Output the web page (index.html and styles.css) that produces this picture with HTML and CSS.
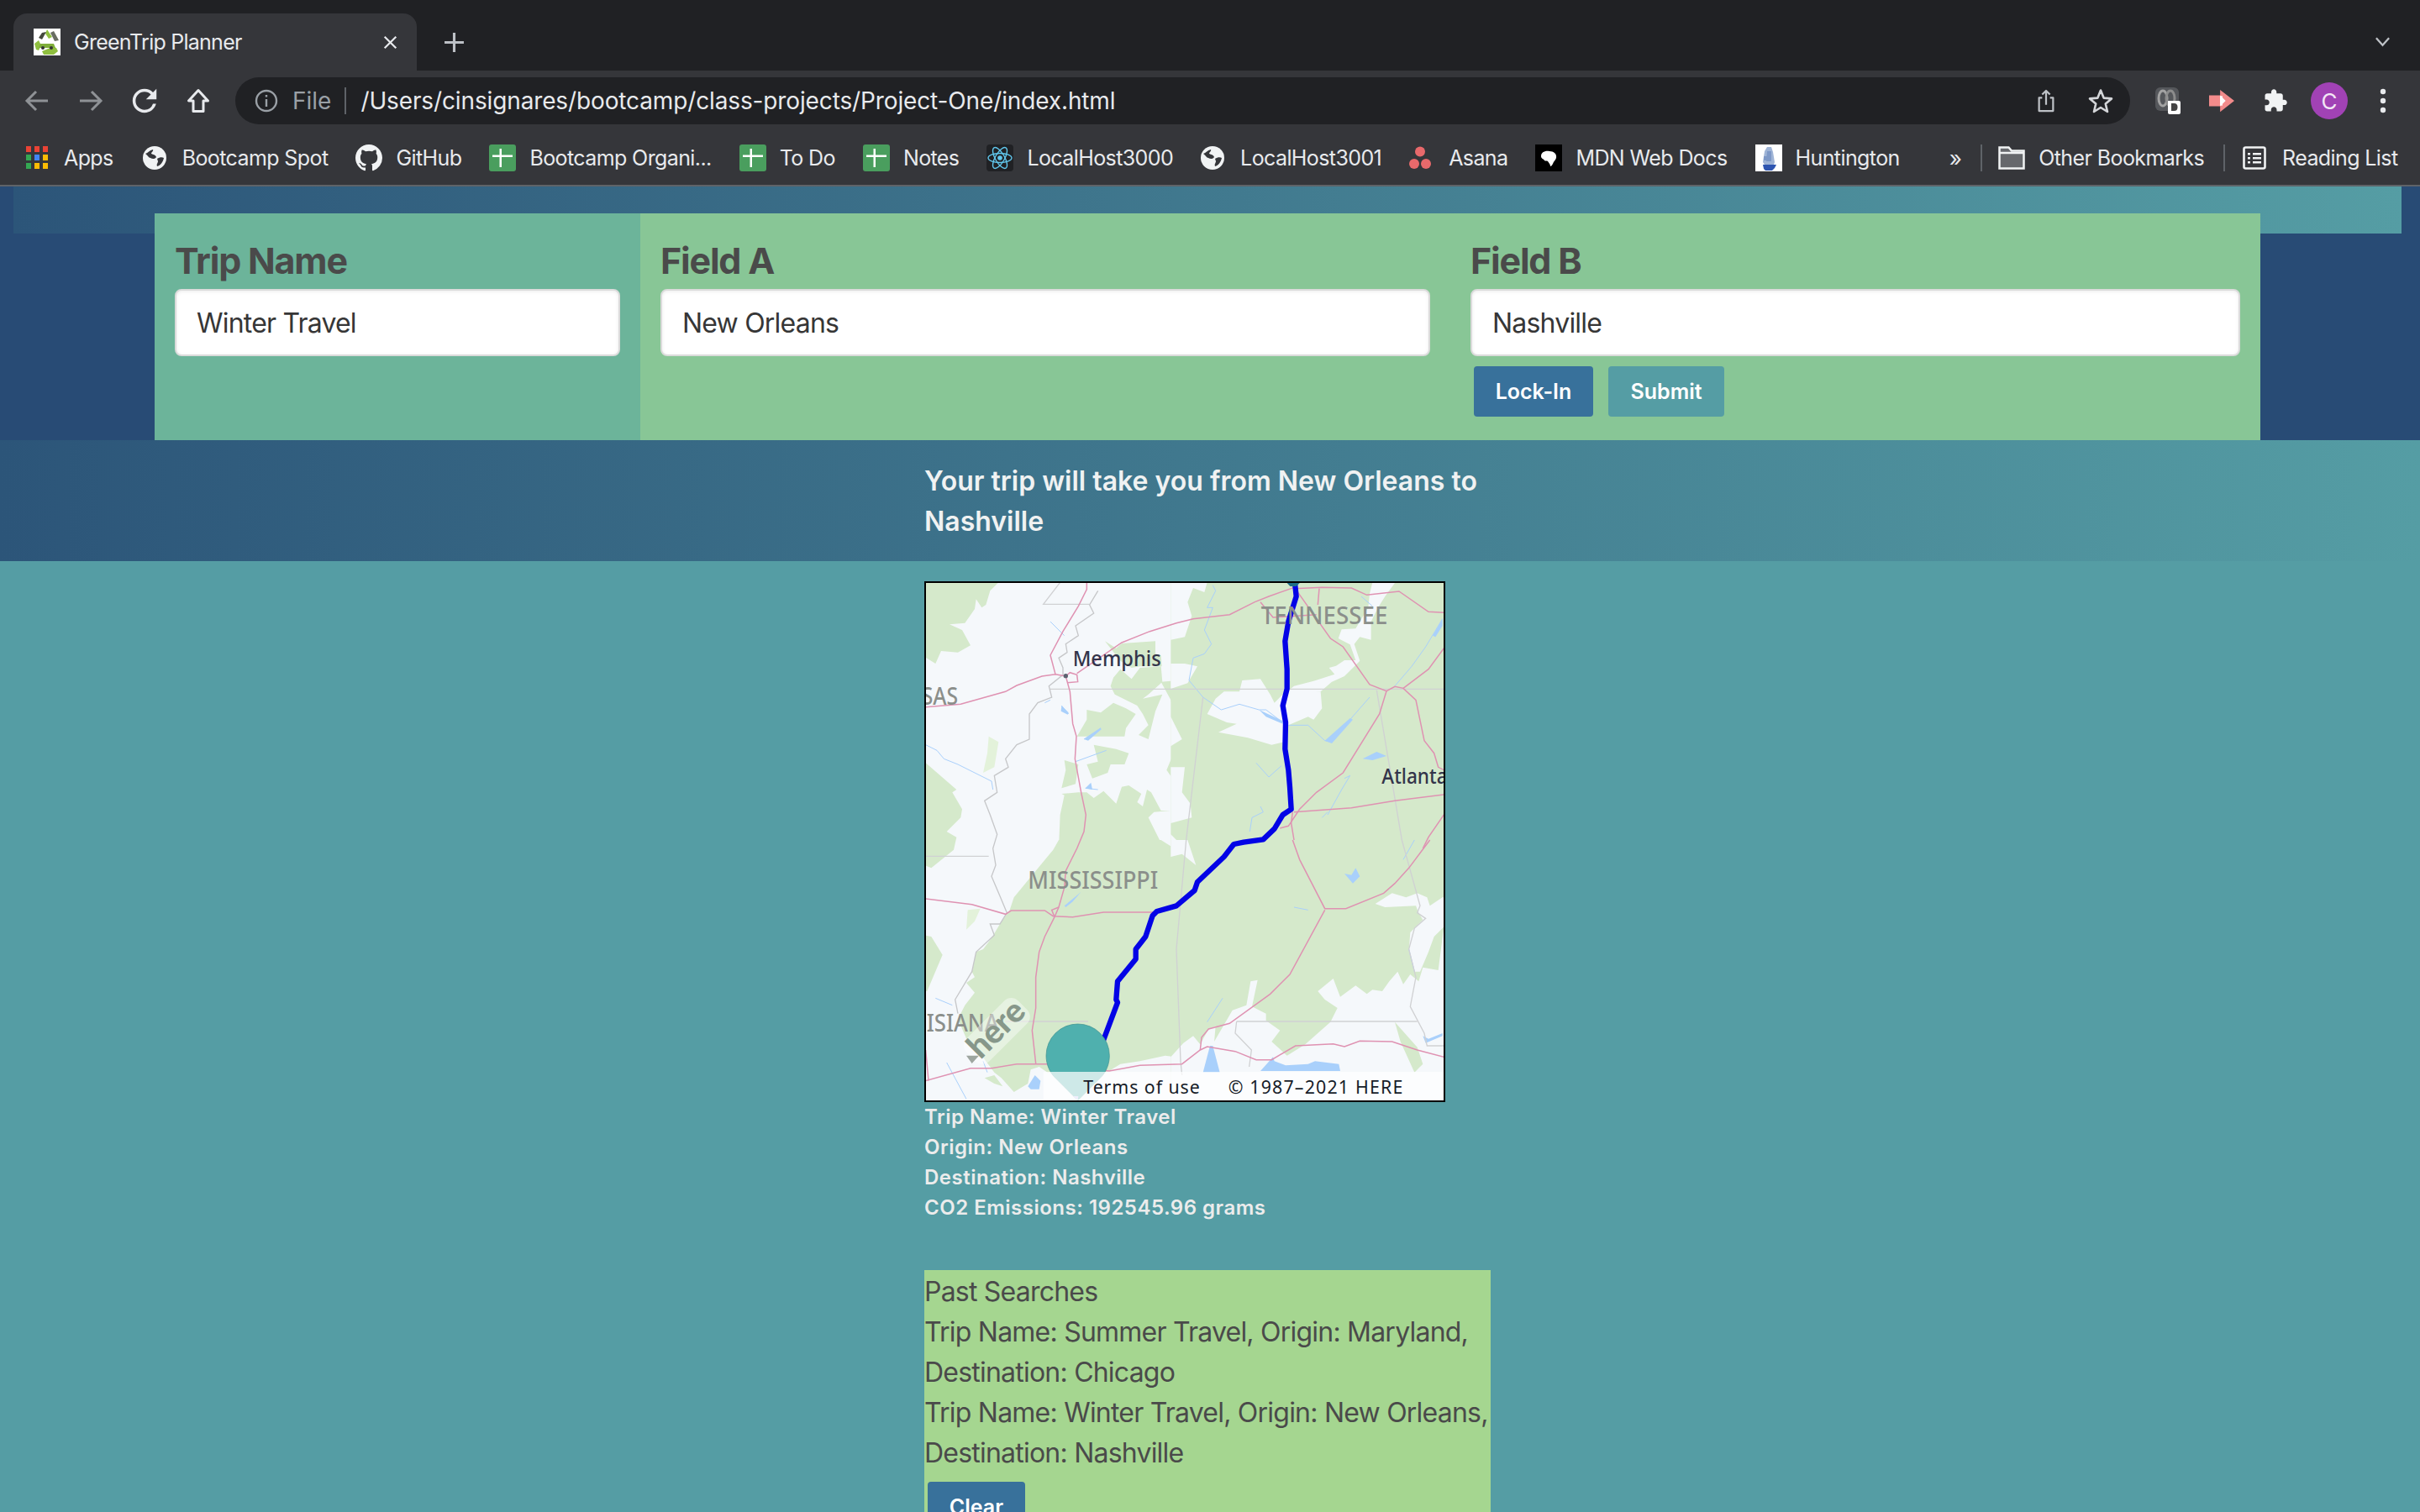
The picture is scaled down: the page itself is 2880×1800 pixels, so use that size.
FILE: index.html
```html
<!DOCTYPE html>
<html lang="en">
<head>
<meta charset="utf-8">
<title>GreenTrip Planner</title>
<link rel="stylesheet" href="styles.css">
</head>
<body>
<svg class="defs" width="0" height="0" aria-hidden="true">
  <defs>
    <symbol id="i-green" viewBox="0 0 32 32"><rect width="32" height="32" rx="3" fill="#4a9e5e"/><path d="M4 12.500h24v2.500H4zM12.500 5h2.500v22h-2.500z" fill="#fff"/></symbol>
    <symbol id="i-globe" viewBox="0 0 28 28"><circle cx="14" cy="14" r="14" fill="#f1f3f4"/><path d="M3 9c3-1 5-4 9-5 1 2-2 3-2 5 2 1 5 1 6 4-2 3-5 2-7 1-2 0-3-3-6-5zM17 15c3-2 6-2 8-1-1 5-4 9-8 10-1-3 1-4 1-6z" fill="#35363a"/></symbol>
  </defs>
</svg>

<header class="chrome">
  <div class="tabstrip">
    <div class="tab">
      <svg class="favicon" viewBox="0 0 32 32"><rect width="32" height="32" fill="#fff"/><path d="M16 1 22 10 18 12 14 6z" fill="#8fbf3f"/><path d="M10 5 15 4 10 13 6 11z" fill="#44483c"/><path d="M1 18 6 14 9 20 6 26 3 25z" fill="#8fbf3f"/><path d="M24 3 30 14 25 15 20 5z" fill="#44483c" opacity=".8"/><path d="M10 27 22 22 27 23 29 27 24 31 12 31z" fill="#8fbf3f"/><path d="M8 18h16l2 5H6z" fill="#7fae3a"/><circle cx="11" cy="23" r="2" fill="#333"/><circle cx="21" cy="23" r="2" fill="#333"/></svg>
      <span class="tab-title">GreenTrip Planner</span>
      <svg class="tab-x" viewBox="0 0 20 20"><path d="M2 2l16 16M18 2 2 18" stroke="#e8eaed" stroke-width="2.600" fill="none"/></svg>
    </div>
    <svg class="tab-plus" viewBox="0 0 24 24"><path d="M12 1v22M1 12h22" stroke="#bdc1c6" stroke-width="3" fill="none"/></svg>
    <svg class="tab-chev" viewBox="0 0 20 12"><path d="M2 1l8 9 8-9" stroke="#bdc1c6" stroke-width="2.400" fill="none"/></svg>
  </div>

  <div class="toolbar">
    <div class="nav-icons">
      <svg class="tool" viewBox="0 0 32 32"><path d="M29 16H5M15 5 4 16l11 11" stroke="#8f9296" stroke-width="3" fill="none"/></svg>
      <svg class="tool" viewBox="0 0 32 32"><path d="M3 16h24M17 5l11 11-11 11" stroke="#8f9296" stroke-width="3" fill="none"/></svg>
      <svg class="tool" viewBox="3 3 18 18"><path d="M17.650 6.350A7.958 7.958 0 0 0 12 4c-4.420 0-7.990 3.580-7.990 8s3.570 8 7.990 8c3.730 0 6.840-2.550 7.730-6h-2.080A5.990 5.990 0 0 1 12 18c-3.310 0-6-2.690-6-6s2.690-6 6-6c1.660 0 3.140.690 4.220 1.780L13 11h7V4l-2.350 2.350z" fill="#e8eaed"/></svg>
      <svg class="tool" viewBox="0 0 32 32"><path d="M16 3.500 4.500 16H10v12.500h12V16h5.500z" stroke="#e8eaed" stroke-width="3" fill="none" stroke-linejoin="round"/></svg>
    </div>
    <div class="omnibox">
      <svg class="info" viewBox="0 0 28 28"><circle cx="14" cy="14" r="12" stroke="#9aa0a6" stroke-width="2.400" fill="none"/><path d="M12.800 12h2.400v9h-2.400zM12.800 7h2.400v2.400h-2.400z" fill="#9aa0a6"/></svg>
      <span class="scheme">File</span>
      <span class="omni-sep"></span>
      <span class="url">/Users/cinsignares/bootcamp/class-projects/Project-One/index.html</span>
      <svg class="omni-share" viewBox="0 0 28 32"><path d="M9 12H5v17h18V12h-4M14 21V3M9 8l5-5 5 5" stroke="#bdc1c6" stroke-width="2.400" fill="none" stroke-linejoin="round"/></svg>
      <svg class="omni-star" viewBox="0 0 32 32"><path d="M16 3.500 19.600 12.600 29 13.400 21.800 19.600 24 29 16 24 8 29 10.200 19.600 3 13.400 12.400 12.600z" stroke="#d4d6d9" stroke-width="2.600" fill="none" stroke-linejoin="round"/></svg>
    </div>
    <div class="ext-icons">
      <svg class="ext" viewBox="0 0 30 32"><rect x="0" y="0" width="28" height="28" rx="6" fill="#55575b"/><ellipse cx="9" cy="13" rx="5" ry="9" fill="none" stroke="#a3a3a3" stroke-width="3"/><ellipse cx="18" cy="13" rx="5" ry="9" fill="none" stroke="#8c8c8c" stroke-width="3"/><path d="M15 16h13a2 2 0 0 1 2 2v12a2 2 0 0 1-2 2H17a2 2 0 0 1-2-2z" fill="#fff"/><path d="M19 19h3.500q4 0 4 4.500t-4 4.500H19z" fill="#444"/></svg>
      <svg class="ext" viewBox="0 0 32 32"><path d="M0 9h14V2l18 14-18 14v-7H0z" fill="#f28b8b"/><path d="M14 9l7 7-7 7z" fill="#fff"/><path d="M14 10h3v12h-3z" fill="#fff"/></svg>
      <svg class="ext" viewBox="0 0 24 24"><path d="M20.500 11H19V7c0-1.100-.900-2-2-2h-4V3.500C13 2.120 11.880 1 10.500 1S8 2.120 8 3.500V5H4c-1.100 0-1.990.900-1.990 2v3.800H3.500c1.490 0 2.700 1.210 2.700 2.700s-1.210 2.700-2.700 2.700H2V20c0 1.100.900 2 2 2h3.800v-1.500c0-1.490 1.210-2.700 2.700-2.700 1.490 0 2.700 1.210 2.700 2.700V22H17c1.100 0 2-.900 2-2v-4h1.500c1.380 0 2.500-1.120 2.500-2.500S21.880 11 20.500 11z" fill="#f1f3f4"/></svg>
      <span class="avatar">C</span>
      <svg class="kebab" viewBox="0 0 8 30"><circle cx="4" cy="4" r="3.200" fill="#e8eaed"/><circle cx="4" cy="15" r="3.200" fill="#e8eaed"/><circle cx="4" cy="26" r="3.200" fill="#e8eaed"/></svg>
    </div>
  </div>

  <nav class="bookmarks">
    <a class="bm bm-wide-gap bm-first">
      <svg class="bm-icon-apps" viewBox="0 0 26 28"><g><rect x="0" width="6" height="7" fill="#ea4335"/><rect x="10" width="6" height="7" fill="#ea4335"/><rect x="20" width="6" height="7" fill="#ea4335"/><rect x="0" y="10" width="6" height="7" fill="#34a853"/><rect x="10" y="10" width="6" height="7" fill="#4285f4"/><rect x="20" y="10" width="6" height="7" fill="#fbbc05"/><rect x="0" y="20" width="6" height="7" fill="#34a853"/><rect x="10" y="20" width="6" height="7" fill="#fbbc05"/><rect x="20" y="20" width="6" height="7" fill="#fbbc05"/></g></svg>
      <span>Apps</span>
    </a>
    <a class="bm bm-wide-gap"><svg class="bm-icon bm-narrow"><use href="#i-globe"/></svg><span>Bootcamp Spot</span></a>
    <a class="bm"><svg class="bm-icon" viewBox="0 0 16 16"><path fill="#f1f3f4" d="M8 0C3.580 0 0 3.580 0 8c0 3.540 2.290 6.530 5.470 7.590.4.070.55-.17.55-.38 0-.19-.01-.82-.01-1.490-2.010.37-2.530-.49-2.690-.94-.09-.23-.48-.94-.82-1.130-.28-.15-.68-.52-.01-.53.63-.01 1.080.58 1.230.82.72 1.210 1.870.87 2.330.66.07-.52.28-.87.51-1.070-1.780-.2-3.640-.89-3.640-3.950 0-.87.31-1.590.82-2.150-.08-.2-.36-1.020.08-2.120 0 0 .67-.21 2.200.82.64-.18 1.320-.27 2-.27.68 0 1.360.09 2 .27 1.530-1.040 2.200-.82 2.200-.82.44 1.100.16 1.920.08 2.120.51.56.82 1.270.82 2.150 0 3.070-1.870 3.750-3.650 3.950.29.25.54.73.54 1.480 0 1.070-.01 1.930-.01 2.200 0 .21.15.46.55.38A8.013 8.013 0 0 0 16 8c0-4.420-3.580-8-8-8z"/></svg><span>GitHub</span></a>
    <a class="bm"><svg class="bm-icon"><use href="#i-green"/></svg><span>Bootcamp Organi...</span></a>
    <a class="bm"><svg class="bm-icon"><use href="#i-green"/></svg><span>To Do</span></a>
    <a class="bm"><svg class="bm-icon"><use href="#i-green"/></svg><span>Notes</span></a>
    <a class="bm"><svg class="bm-icon" viewBox="0 0 32 32"><rect width="32" height="32" rx="4" fill="#202124"/><g fill="none" stroke="#61c8ee" stroke-width="1.400"><ellipse cx="16" cy="16" rx="14" ry="5.500"/><ellipse cx="16" cy="16" rx="14" ry="5.500" transform="rotate(60 16 16)"/><ellipse cx="16" cy="16" rx="14" ry="5.500" transform="rotate(120 16 16)"/></g><circle cx="16" cy="16" r="2.800" fill="#61c8ee"/></svg><span>LocalHost3000</span></a>
    <a class="bm bm-wide-gap"><svg class="bm-icon bm-narrow"><use href="#i-globe"/></svg><span>LocalHost3001</span></a>
    <a class="bm bm-asana-item"><svg class="bm-icon bm-asana" viewBox="0 0 26 28"><circle cx="13" cy="6.500" r="6" fill="#e8696b"/><circle cx="6" cy="21" r="6" fill="#e8696b"/><circle cx="20" cy="21" r="6" fill="#e8696b"/></svg><span>Asana</span></a>
    <a class="bm"><svg class="bm-icon" viewBox="0 0 32 32"><rect width="32" height="32" fill="#000"/><path d="M7 14c0-5 5-7 10-6 5 0 9 3 8 8-1 3-3 4-4 7-1 2-2 3-3 3 0-3-2-4-3-6-1-1-3 0-4-1-1-2-4-2-4-5z" fill="#fff"/></svg><span>MDN Web Docs</span></a>
    <a class="bm"><svg class="bm-icon" viewBox="0 0 32 32"><rect width="32" height="32" fill="#fff"/><path d="M14 3h5l2 6 2 12-1 3H11l-2-3 2-13z" fill="#9fb4d6"/><path d="M14 8h5v12h-6zM10 14h4v5h-4z" fill="#6f8cc0" opacity=".7"/><path d="M9 24h16l-2 4-3 3h-8l-2-2z" fill="#2e55b0"/></svg><span>Huntington</span></a>
    <span class="bm-more">»</span>
    <span class="bm-sep"></span>
    <a class="bm"><svg class="bm-icon bm-folder" viewBox="0 0 32 28"><path d="M1.500 1.500h11l3.500 4h14.500v21H1.500z" fill="#66686c" stroke="#f1f3f4" stroke-width="2.500"/><path d="M1.500 8h29" stroke="#f1f3f4" stroke-width="2.500"/></svg><span>Other Bookmarks</span></a>
    <span class="bm-sep bm-sep-2"></span>
    <a class="bm bm-wide-gap"><svg class="bm-icon bm-narrow" viewBox="0 0 28 28"><rect x="1.500" y="1.500" width="25" height="25" rx="2" fill="none" stroke="#f1f3f4" stroke-width="2.600"/><path d="M6 8h3v2.500H6zM6 13h3v2.500H6zM6 18h3v2.500H6zM12 8h10v2.500H12zM12 13h10v2.500H12zM12 18h10v2.500H12z" fill="#f1f3f4"/></svg><span>Reading List</span></a>
  </nav>
</header>

<main class="page">
  <section class="top">
    <div class="strip"></div>
    <form class="fields">
      <div class="col col-trip">
        <label class="label">Trip Name</label>
        <input class="input" value="Winter Travel">
      </div>
      <div class="col col-mid">
        <label class="label">Field A</label>
        <input class="input" value="New Orleans">
      </div>
      <div class="col col-mid">
        <label class="label">Field B</label>
        <input class="input" value="Nashville">
        <div class="buttons">
          <button type="button" class="btn btn-lock">Lock-In</button>
          <button type="button" class="btn btn-submit">Submit</button>
        </div>
      </div>
    </form>
  </section>

  <section class="banner">
    <p class="banner-text">Your trip will take you from New Orleans to Nashville</p>
  </section>

  <section class="results">
    <div class="map">
      <svg class="map-svg" viewBox="66 42 1848 1848">
        <rect x="0" y="0" width="2000" height="2000" fill="#f5f8fb"/>
        <!-- land, north-west quadrant -->
        <g fill="#d5e9cb">
          <path d="M60 40H325L295 70 280 120 265 130 245 100 240 135 205 185 150 190 195 210 225 265 180 290 120 285 100 330 60 305z"/>
          <path d="M60 680 175 780 160 790 195 850 190 880 140 930 175 950 165 995 85 1060 60 1050z"/>
          <path d="M540 990 545 870 560 800 550 795 610 790 640 790 665 810 700 785 745 830 765 770 790 765 835 795 820 825 840 840 855 780 870 790 905 855 940 855 880 860 860 880 915 990 990 1000H540z"/>
          <path d="M950 880 990 910V1000H965z"/>
          <path d="M560 675 610 690 600 760 550 775 565 710z"/>
          <path d="M665 620 745 635 790 650 775 690 725 690 715 720 660 740 640 690 680 680z"/>
          <path d="M640 495 690 505 735 470 780 490 815 510 780 560 775 590 700 590 605 590 640 530z"/>
          <path d="M735 380 760 350 800 385 830 345 905 340 910 395 860 440 840 455 910 440 885 500 860 600 825 585 860 550 840 510 820 480 740 440 725 410z"/>
          <path d="M705 250 745 275 765 258 885 250 885 295 905 300 908 340H830L800 345 760 320z"/>
          <path d="M905 395 965 390 955 345 1000 335V780L960 760 925 710 950 650 960 560 940 460z"/>
        </g>
        <path d="M290 590 325 610 310 700 270 720 285 650z" fill="#e3f2da"/>
        <!-- land, north-east quadrant -->
        <g transform="translate(960 0)">
          <path d="M-20 40H955V1000H-20z" fill="#d5e9cb"/>
          <g fill="#f5f8fb">
            <path d="M-20 40H110L100 75 60 60 40 110 55 160 30 235-20 245z"/>
            <path d="M700 40 780 42 745 90 720 130 695 180 695 245 655 235 635 260 655 320 600 375 555 395 515 430H395L420 410 490 392 565 368 545 345 570 338 600 318 640 318 620 262 578 240 590 208 640 205 685 130 690 80z"/>
            <path d="M350 470 395 425 515 430 520 490 490 530 470 520 400 550 385 610 340 620 255 595 150 575 215 545 180 540 110 510 140 455 170 430 225 430 235 390 300 385 335 440z"/>
            <path d="M-20 330 30 330 75 340 40 400-20 420z"/>
            <path d="M-20 520 20 600-20 625z"/>
            <path d="M-20 700 30 700 20 790 50 830 55 880-20 900z"/>
            <path d="M-20 940 30 990 -20 1000z"/>
          </g>
        </g>
        <!-- land, south-west quadrant -->
        <g transform="translate(0 960)">
          <path d="M540 0 520 35 380 205 365 250 330 300 300 350 270 390 245 400 230 470 240 490 210 510 240 545 205 590 180 640 215 720 265 770 310 830 335 850 380 900 430 870 440 820 470 810 500 830 700 830 720 825 760 800 830 790 920 770 1000 780V60L905 0z" fill="#d5e9cb"/>
          <path d="M215 250 260 245 240 290 210 320z" fill="#e3f2da"/>
          <path d="M60 340 85 345 125 410 70 540H60z" fill="#d5e9cb"/>
          <path d="M275 850 310 840 340 880 310 870z" fill="#d5e9cb"/>
        </g>
        <!-- land, south-east quadrant -->
        <g transform="translate(960 960)">
          <path d="M-20 0H960V960H-20z" fill="#d5e9cb"/>
          <path d="M-20 0H40L70 90 20 50-20 60z" fill="#f5f8fb"/>
          <path d="M960 205 950 205 905 235 895 205 860 190 820 205 770 190 710 228 745 240 855 235 865 260 880 285 835 330 830 395 850 470 870 470 900 400 920 345 955 310 935 465 880 455 865 505 835 480 810 515 790 470 760 505 735 540 700 535 680 550 640 520 585 560 560 495 505 540 530 570 575 600 550 650 460 730 395 770 340 720 370 680 320 645 320 620 270 595 290 500 265 505 250 590 200 608 135 720 140 665 115 675 85 730 60 700 25 725-20 775V960H960z" fill="#f5f8fb"/>
          <path d="M780 650 860 740 880 800 850 830 800 720z" fill="#d5e9cb"/>
        </g>

        <!-- water -->
        <g fill="none" stroke="#a9d0fb" stroke-width="3">
          <path d="M65 620 105 640 130 670 180 690 240 720 300 750 305 780M550 480 575 510M630 600 690 560M600 680 710 640M635 775 680 780M490 470 510 460M510 180 560 230"/>
          <path transform="translate(960 0)" d="M130 50 140 70 110 130 130 130 100 210 125 260 100 295 60 310 45 390 70 420 95 450 160 495 225 475 295 495 320 495 380 540M400 550 470 550 530 605 550 610 620 530 690 450M660 90 700 125M780 410 840 340 890 270 950 170M600 740 620 730 590 780 540 870M520 880 540 860M285 685 330 735 375 695M300 840 310 860 270 880 262 930"/>
          <path transform="translate(0 960)" d="M100 565 160 590M140 795 210 925M270 790 285 830"/>
          <path transform="translate(960 960)" d="M110 650 165 565M420 240 470 250M830 390 850 470M810 70 850 0"/>
        </g>
        <g fill="#a9d0fb">
          <path d="M630 600 690 560 692 565 645 605z"/><path d="M550 480 575 505 572 512 548 500z"/><path d="M635 775 655 755 660 780z"/>
          <path transform="translate(960 0)" d="M295 495 380 535 380 545 320 520z"/>
          <path transform="translate(960 0)" d="M530 605 620 525 630 530 555 615z"/>
          <path transform="translate(960 0)" d="M665 670 715 645 750 660 700 675z"/>
          <path transform="translate(960 0)" d="M915 230 950 170 950 195 925 235z"/>
          <path transform="translate(960 960)" d="M600 120 625 125 640 100 655 130 630 155z"/>
          <path transform="translate(960 960)" d="M95 830 120 735 130 735 155 830z"/>
          <path transform="translate(960 960)" d="M300 825 345 775 350 790 390 805 470 800 495 790 580 800 585 825z"/>
          <path transform="translate(960 960)" d="M880 700 890 725 950 700 950 690 900 710z"/>
          <path transform="translate(0 960)" d="M560 235 620 185 590 220 565 240z"/>
          <path transform="translate(0 960)" d="M430 880 455 840 475 860 470 890 440 890z"/>
        </g>

        <!-- state lines and Mississippi river -->
        <g fill="none" stroke="#d0d1d3" stroke-width="4">
          <path d="M510 421H1915"/>
          <path d="M545 40 485 118H650"/>
          <path d="M1055 450 995 960 960 1350 975 1750 980 1800"/>
          <path d="M1675 425 1765 960 1830 1195 1820 1220 1850 1240 1810 1275 1790 1350 1815 1450 1795 1555 1845 1650 1855 1695H1915"/>
          <path d="M1175 1608H1820M1175 1608 1170 1650 1228 1710 1220 1770"/>
          <path d="M65 1018H290"/>
          <path d="M350 1608H645"/>
        </g>
        <g fill="none" stroke="#c6c7c9" stroke-width="4">
          <path d="M680 70 650 120 665 150 600 195 610 230 565 260 570 290 540 310 555 345 555 370 505 410 515 450 465 470 435 510 435 600 390 620 350 670 360 700 310 730 320 790 275 820 295 870 320 940 305 990 315 1050 300 1090 330 1160 355 1220 330 1260 295 1260 310 1300 245 1360 230 1430 170 1530 180 1580"/>
        </g>
        <!-- roads -->
        <g fill="none" stroke="#df92b2" stroke-width="4.500">
          <path d="M640 40V65L610 125 555 215 510 300 528 368"/>
          <path d="M65 485 190 475 350 430 390 408 480 375 528 368 565 375 580 430 590 545 603 590 598 670 620 790 637 870 630 930 605 990 565 1070 560 1130 540 1200 525 1235 490 1305 470 1360 458 1450V1560L445 1640 458 1758"/>
          <path d="M605 365 765 255 865 215 960 185 1020 170 1150 155 1240 110 1290 90 1380 58"/>
          <path d="M565 375 580 362 605 370 608 395 570 398"/>
          <path d="M65 1170 230 1190 350 1225 370 1212H490L520 1232 590 1235 700 1218H880"/>
          <path d="M540 1200 515 1210 525 1235"/>
          <path d="M65 1820 225 1775H300L390 1760H500L720 1785 830 1765 980 1760 1045 1710 1070 1698 1170 1715 1245 1745H1300L1385 1695 1520 1688 1560 1698 1615 1678 1730 1680 1820 1710 1915 1735"/>
          <path d="M65 1710 75 1820"/>
          <path d="M1375 960 1400 1030 1490 1205H1565L1700 1150 1740 1115 1790 1060 1865 960"/>
          <path d="M1490 1210 1365 1440 1295 1510 1150 1615 1075 1635 1050 1665 1045 1710"/>
          <path d="M1390 70 1510 240 1555 270 1650 405 1710 428 1740 412 1770 418 1815 460 1845 605 1880 650 1895 700 1915 710"/>
          <path d="M1470 62 1465 120M1260 110 1305 165 1460 155"/>
          <path d="M1380 62 1480 58 1585 60 1640 85 1755 72 1860 145 1915 148"/>
          <path d="M1770 418 1860 350 1915 275"/>
          <path d="M1710 428 1685 510 1555 720 1460 790 1400 850 1360 910 1330 918"/>
          <path d="M1380 860 1585 845 1740 820 1915 798"/>
          <path d="M1375 860 1370 900 1380 960"/>
          <path d="M1915 870 1860 950 1840 990"/>
        </g>
        <circle cx="565" cy="374" r="8" fill="#5d6270"/>

        <!-- route -->
        <path class="route" d="M1383 42 1388 90 1360 180 1348 250 1355 350 1355 420 1340 480 1350 540 1348 635 1360 710 1365 770 1370 850 1340 870 1310 920 1270 958 1200 968 1165 975 1130 1020 1035 1110 1025 1140 960 1195 890 1215 875 1230 850 1305 815 1350 815 1385 750 1465 745 1530 750 1540 705 1660 690 1700"/>
        <path d="M1355 42h45l-12 12h-22z" fill="#1e6f86"/>

        <!-- labels -->
        <text class="mt mt-state" x="1262" y="190" textLength="452" lengthAdjust="spacingAndGlyphs">TENNESSEE</text>
        <text class="mt mt-state" x="430" y="1134" textLength="465" lengthAdjust="spacingAndGlyphs">MISSISSIPPI</text>
        <text class="mt mt-state" x="50" y="478" textLength="130" lengthAdjust="spacingAndGlyphs">SAS</text>
        <text class="mt mt-state" x="68" y="1645" textLength="258" lengthAdjust="spacingAndGlyphs">ISIANA</text>
        <text class="mt mt-city" x="590" y="340" textLength="315" lengthAdjust="spacingAndGlyphs">Memphis</text>
        <text class="mt mt-city" x="1693" y="758" textLength="235" lengthAdjust="spacingAndGlyphs">Atlanta</text>

        <!-- HERE logo -->
        <g transform="translate(335 1665) rotate(-45)">
          <rect x="-125" y="-85" width="260" height="115" rx="35" fill="#fff" opacity=".42"/>
          <text class="mt-here" x="-110" y="5">here</text>
        </g>
        <path d="M210 1730 255 1730 230 1758z" fill="#9ea6a0"/>

        <!-- pin -->
        <path d="M495 1730a113 113 0 0 1 226 0c0 30-12 60-33 80L608 1890 528 1810c-21-20-33-50-33-80z" fill="#4fb0ae" stroke="#3c8f8e" stroke-width="2"/>
        <path d="M590 1875 608 1890 610 1875z" fill="#c9c7f5"/>

        <!-- terms bar -->
        <rect x="485" y="1788" width="1430" height="102" fill="#fff" opacity=".72"/>
        <text class="mt mt-terms" x="628" y="1865" textLength="415" lengthAdjust="spacing">Terms of use</text>
        <text class="mt mt-terms" x="1145" y="1865" textLength="623" lengthAdjust="spacing">© 1987–2021 HERE</text>
      </svg>
    </div>

    <div class="summary">
      <p>Trip Name: Winter Travel</p>
      <p>Origin: New Orleans</p>
      <p>Destination: Nashville</p>
      <p>CO2 Emissions: 192545.96 grams</p>
    </div>

    <div class="past">
      <p>Past Searches</p>
      <p>Trip Name: Summer Travel, Origin: Maryland, Destination: Chicago</p>
      <p>Trip Name: Winter Travel, Origin: New Orleans, Destination: Nashville</p>
      <button type="button" class="btn btn-lock btn-clear">Clear</button>
    </div>
  </section>
</main>
</body>
</html>
```

FILE: styles.css
```css
* { box-sizing: border-box; }
html, body { margin: 0; padding: 0; }
body {
  width: 2880px;
  height: 1800px;
  overflow: hidden;
  background: #559da4;
  font-family: Inter, "Noto Sans", "Liberation Sans", sans-serif;
  color: #4a4a4a;
}
p { margin: 0; }
.defs { position: absolute; }

/* ---------- browser chrome ---------- */
.chrome { background: #35363a; color: #e8eaed; }
.tabstrip {
  height: 84px;
  background: #202124;
  display: flex;
  align-items: flex-end;
  padding-left: 16px;
}
.tab {
  width: 480px;
  height: 68px;
  background: #35363a;
  border-radius: 16px 16px 0 0;
  display: flex;
  align-items: center;
  padding: 0 23px 0 24px;
}
.favicon { width: 32px; height: 32px; flex: none; }
.tab-title { margin-left: 16px; font-size: 25px; letter-spacing: -.75px; flex: 1; white-space: nowrap; }
.tab-x { width: 17px; height: 17px; }
.tab-plus { width: 25px; height: 25px; margin: 0 0 21px 32px; }
.tab-chev { width: 19px; height: 12px; margin: 0 35px 28px auto; }

.toolbar {
  height: 64px;
  display: flex;
  align-items: flex-end;
  padding-left: 28px;
}
.nav-icons {
  height: 56px;
  display: flex;
  align-items: center;
  gap: 32px;
}
.tool { width: 32px; height: 32px; flex: none; }
.omnibox {
  margin-left: 28px;
  width: 2255px;
  height: 56px;
  border-radius: 28px;
  background: #202124;
  display: flex;
  align-items: center;
  padding-left: 23px;
}
.info { width: 28px; height: 28px; flex: none; }
.scheme { margin-left: 17px; font-size: 28px; color: #9aa0a6; }
.omni-sep { width: 2px; height: 32px; margin: 0 17px 0 16px; background: #5f6368; }
.url { font-size: 28px; color: #e8eaed; white-space: nowrap; flex: 1; letter-spacing: -.13px; }
.omni-share { width: 26px; height: 30px; flex: none; }
.omni-star { width: 32px; height: 32px; margin: 0 19px 0 36px; flex: none; }
.ext-icons {
  height: 56px;
  display: flex;
  align-items: center;
  margin-left: 30px;
}
.ext { width: 30px; height: 32px; flex: none; margin-right: 34px; }
.avatar {
  width: 44px;
  height: 44px;
  margin-left: -7px;
  border-radius: 50%;
  background: #a142b5;
  color: #f3e6f6;
  font-size: 26px;
  display: flex;
  align-items: center;
  justify-content: center;
}
.kebab { width: 8px; height: 30px; margin-left: 38px; }

.bookmarks {
  height: 74px;
  padding: 8px 0 0 31px;
  border-bottom: 2px solid #5f6368;
  display: flex;
  align-items: center;
  font-size: 25px;
  letter-spacing: -.6px;
  white-space: nowrap;
}
.bm { display: flex; align-items: center; gap: 16px; margin-right: 33px; flex: none; }
.bm-first { margin-right: 35px; }
.bm-wide-gap { gap: 19px; }
.bm-asana-item { gap: 21px; }
.bm-icon { width: 32px; height: 32px; flex: none; }
.bm-narrow { width: 28px; height: 28px; }
.bm-asana { width: 26px; height: 28px; }
.bm-folder { height: 28px; }
.bm-icon-apps { width: 26px; height: 28px; }
.bm-more { font-size: 26px; margin: 0 23px 0 26px; flex: none; }
.bm-sep { width: 2px; height: 32px; background: #5f6368; margin-right: 19px; flex: none; }
.bm-sep-2 { margin-left: -10px; margin-right: 21px; }

/* ---------- page ---------- */
.top { background: #284b75; height: 302px; }
.strip {
  height: 56px;
  margin: 0 22px 0 16px;
  background: linear-gradient(to right, #2c5579, #559da4);
}
.fields {
  margin: -24px 190px 0 184px;
  height: 270px;
  display: grid;
  grid-template-columns: 578px 964px 964px;
}
.col { padding: 24px; background: #88c696; }
.col-trip { background: #6cb49a; }
.label {
  display: block;
  font-size: 43px;
  line-height: 64px;
  font-weight: 700;
  color: #4a4a4a;
  letter-spacing: -1.2px;
  margin-bottom: 2px;
}
.input {
  display: block;
  width: 100%;
  height: 80px;
  padding: 0 24px;
  border: 2px solid #dbdbdb;
  border-radius: 8px;
  background: #fff;
  box-shadow: inset 0 1px 4px rgba(10,10,10,.08);
  font-family: inherit;
  font-size: 32px;
  color: #363636;
  letter-spacing: -.8px;
}
.buttons { display: flex; gap: 18px; margin: 12px 0 0 4px; }
.btn {
  height: 60px;
  border: 0;
  border-radius: 4px;
  font-family: inherit;
  font-size: 25px;
  font-weight: 600;
  color: #fff;
  padding: 0;
}
.btn-lock { width: 142px; background: #38719b; }
.btn-submit { width: 138px; background: #559da4; }

.banner {
  height: 144px;
  padding: 25px 0 0 1100px;
  background: linear-gradient(to right, #2c5579, #559da4);
}
.banner-text {
  width: 674px;
  font-size: 32px;
  line-height: 48px;
  font-weight: 600;
  color: #f0f2f2;
}

.results { padding: 24px 0 0 1100px; }
.map {
  width: 620px;
  height: 620px;
  border: 2px solid #000;
  overflow: hidden;
}
.map-svg { display: block; width: 616px; height: 616px; }
.route { fill: none; stroke: #0303e6; stroke-width: 19; stroke-linejoin: round; }
.mt { font-family: "Noto Sans", "Open Sans", sans-serif; }
.mt-state { font-size: 84px; fill: #8b8f8b; font-weight: 500; }
.mt-city { font-size: 76px; fill: #33344a; font-weight: 500; }
.mt-terms { font-size: 64px; fill: #161c28; }
.mt-here { font-family: Lato, "Noto Sans", sans-serif; font-size: 118px; font-weight: 900; fill: #87978a; }

.summary {
  width: 674px;
  font-size: 24px;
  line-height: 36px;
  font-weight: 600;
  letter-spacing: .5px;
  color: #ececec;
}
.past {
  width: 674px;
  height: 400px;
  margin-top: 56px;
  padding-top: 2px;
  background: #a5d690;
  font-size: 32px;
  line-height: 48px;
  color: #4a4a4a;
  letter-spacing: -.78px;
}
.btn-clear { display: block; width: 116px; margin: 10px 0 0 4px; letter-spacing: 0; }
```
